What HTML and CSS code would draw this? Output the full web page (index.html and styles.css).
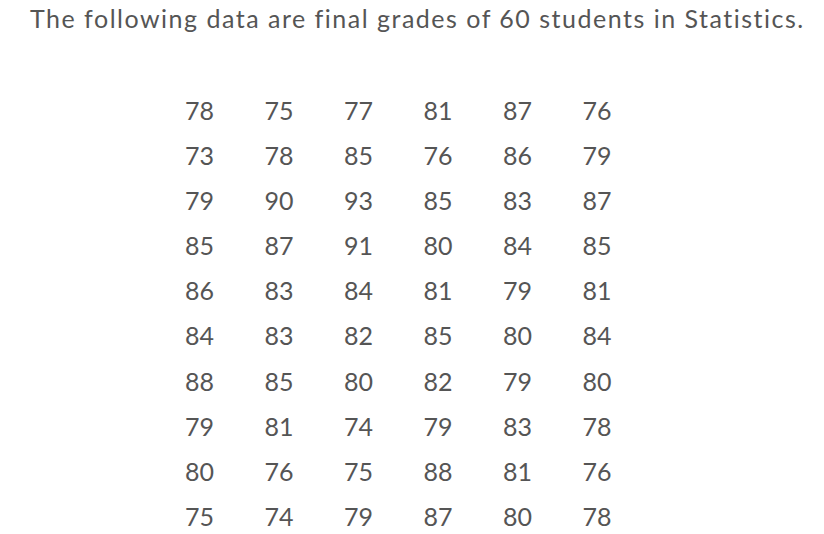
FILE: index.html
```html
<!DOCTYPE html>
<html>
<head>
<meta charset="utf-8">
<link rel="stylesheet" href="styles.css">
</head>
<body>
<p class="title">The following data are final grades of 60 students in Statistics.</p>
<div class="grid">
<span>78</span><span>75</span><span>77</span><span>81</span><span>87</span><span>76</span>
<span>73</span><span>78</span><span>85</span><span>76</span><span>86</span><span>79</span>
<span>79</span><span>90</span><span>93</span><span>85</span><span>83</span><span>87</span>
<span>85</span><span>87</span><span>91</span><span>80</span><span>84</span><span>85</span>
<span>86</span><span>83</span><span>84</span><span>81</span><span>79</span><span>81</span>
<span>84</span><span>83</span><span>82</span><span>85</span><span>80</span><span>84</span>
<span>88</span><span>85</span><span>80</span><span>82</span><span>79</span><span>80</span>
<span>79</span><span>81</span><span>74</span><span>79</span><span>83</span><span>78</span>
<span>80</span><span>76</span><span>75</span><span>88</span><span>81</span><span>76</span>
<span>75</span><span>74</span><span>79</span><span>87</span><span>80</span><span>78</span>
</div>
</body>
</html>
```
FILE: styles.css
```css
html, body {
  margin: 0;
  padding: 0;
  background: #ffffff;
}
body {
  font-family: Lato, "Open Sans", sans-serif;
  font-weight: 400;
  color: #555555;
  width: 824px;
  height: 534px;
  overflow: hidden;
}
.title {
  margin: 0;
  padding: 2px 0 0 30px;
  font-size: 25px;
  line-height: 32px;
  letter-spacing: 1.5px;
  white-space: nowrap;
}
.grid {
  display: grid;
  grid-template-columns: repeat(6, 79.5px);
  grid-auto-rows: 45.1px;
  margin: 54px 0 0 185px;
  font-size: 25px;
  line-height: 45px;
}
```
